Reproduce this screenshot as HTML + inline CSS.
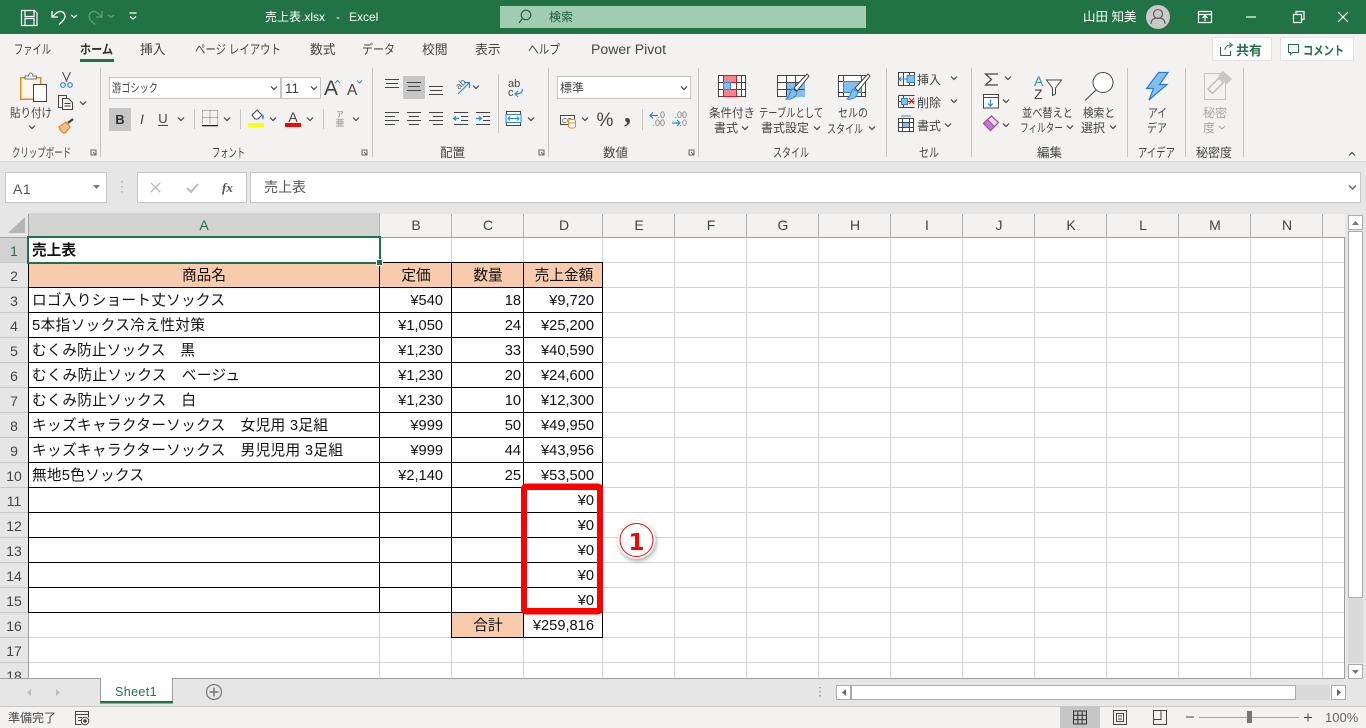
<!DOCTYPE html>
<html lang="ja"><head><meta charset="utf-8"><title>売上表.xlsx - Excel</title>
<style>
html,body{margin:0;padding:0;width:1366px;height:728px;overflow:hidden;background:#f3f2f1}
svg{display:block;font-family:"Liberation Sans","Noto Sans CJK JP",sans-serif}
.u{font-size:12px;fill:#444}
.m{text-anchor:middle}
.e{text-anchor:end}
.cell{font-size:14.67px;fill:#111}
.hd{font-size:14px;fill:#444;text-anchor:middle}
.l{fill:none;stroke:#444;stroke-width:1}
.crisp line,.crisp rect{shape-rendering:crispEdges}
</style></head><body>
<svg width="1366" height="728" viewBox="0 0 1366 728" xmlns="http://www.w3.org/2000/svg">
<defs>
<path id="c" d="M-3-1.5L0 1.5L3-1.5" fill="none" stroke="#444" stroke-width="1.2"/>
<path id="d" d="M91 150h5v5h-5zM93 152l3 3M96 153v2h-2" fill="none" stroke="#666" stroke-width="1"/>
</defs>
<!-- title bar -->
<rect width="1366" height="34" fill="#217346"/>
<g fill="none" stroke="#fff" stroke-width="1.2">
<path d="M21.5 10.5h13l2.5 2.5v12.5h-15.500zM25 10.500v6h9v-6M25 25.500v-7h9v7"/>
<path d="M52 11v6h6M52 17l5-4.500c3-2 6-1 7.500 1.500c1.500 3 0 6-5.500 10.500" stroke-width="1.300"/>
<path d="M102 11v6h-6M102 17l-5-4.500c-3-2-6-1-7.500 1.500c-1.500 3 0 6 5.500 10.500" stroke="#5f9d7b" stroke-width="1.300"/>
<path d="M71 15l3 2.500l3-2.500"/><path d="M108 15l3 2.500l3-2.500" stroke="#5f9d7b"/>
<path d="M129.500 13h7M130 16.500l3 2.500l3-2.500"/>
<path d="M1198.500 11.500h13v11h-13zM1198.500 14.500h13M1205 21v-5M1202.500 18l2.500-2.500l2.500 2.500"/>
<path d="M1246 17h10"/>
<path d="M1293.500 14.500h8v8h-8zM1296 14v-2.500h8v8h-2.500"/>
<path d="M1338 12l10 10M1348 12l-10 10"/>
</g>
<text x="265" y="21" font-size="12" fill="#fff">売上表.xlsx</text><text x="336" y="21" font-size="12" fill="#fff">-</text><text x="349" y="21" font-size="12" fill="#fff">Excel</text>
<rect x="500" y="6" width="366" height="22" fill="#a0cdb2"/>
<circle cx="526" cy="15" r="4.800" fill="none" stroke="#1e5c3a" stroke-width="1.100"/><path d="M522.500 18.500l-3.500 4.500" stroke="#1e5c3a" stroke-width="1.200"/>
<text x="549" y="21" font-size="12" fill="#1e5c3a">検索</text>
<text x="1083" y="21" font-size="12.500" fill="#fff">山田 知美</text>
<circle cx="1158" cy="17" r="12" fill="#c9c9c9"/><circle cx="1158" cy="14" r="4.500" fill="none" stroke="#555" stroke-width="1.100"/><path d="M1151 24c0-4.500 3-6 7-6s7 1.500 7 6" fill="none" stroke="#555" stroke-width="1.100"/>
<!-- tabs -->
<g class="u" style="font-size:12.800px">
<text x="14" y="54" textLength="37" lengthAdjust="spacingAndGlyphs">ファイル</text>
<text x="80" y="54" textLength="33" lengthAdjust="spacingAndGlyphs" font-weight="700" style="fill:#333">ホーム</text>
<text x="140" y="54">挿入</text>
<text x="195" y="54" textLength="86" lengthAdjust="spacingAndGlyphs">ページ レイアウト</text>
<text x="310" y="54">数式</text>
<text x="362" y="54" textLength="33" lengthAdjust="spacingAndGlyphs">データ</text>
<text x="422" y="54">校閲</text>
<text x="475" y="54">表示</text>
<text x="528" y="54" textLength="32" lengthAdjust="spacingAndGlyphs">ヘルプ</text>
<text x="591" y="54" textLength="75" lengthAdjust="spacingAndGlyphs" style="font-size:13.400px">Power Pivot</text>
</g>
<rect x="80" y="59" width="34" height="3" fill="#217346"/>
<rect x="1212.500" y="37.500" width="59" height="23" rx="1" fill="#fff" stroke="#e4e2e0"/>
<rect x="1280.500" y="37.500" width="73" height="23" rx="1" fill="#fff" stroke="#e4e2e0"/>
<path d="M1220.500 47v8.500h10V51M1225 50c0-3 2-5 6-5M1229 42.500l3.500 2.500l-3.500 2.500" fill="none" stroke="#217346"/>
<path d="M1288.500 44.500h10v8h-6l-2 2v-2h-2z" fill="none" stroke="#217346"/>
<text x="1236" y="55" font-size="13" font-weight="700" fill="#217346">共有</text>
<text x="1303" y="55" font-size="12.500" font-weight="700" fill="#217346" textLength="41" lengthAdjust="spacingAndGlyphs">コメント</text>
<!-- ribbon bottom -->
<rect y="161" width="1366" height="6" fill="#d9d9d9"/><rect y="162" width="1366" height="52" fill="#e6e6e6"/>
<!-- separators -->
<g stroke="#c8c6c4" class="crisp">
<line x1="100.500" x2="100.500" y1="68" y2="157"/><line x1="372.500" x2="372.500" y1="68" y2="157"/><line x1="548.500" x2="548.500" y1="68" y2="157"/><line x1="698.500" x2="698.500" y1="68" y2="157"/><line x1="886.500" x2="886.500" y1="68" y2="157"/><line x1="971.500" x2="971.500" y1="68" y2="157"/><line x1="1127.500" x2="1127.500" y1="68" y2="157"/><line x1="1185.500" x2="1185.500" y1="68" y2="157"/><line x1="1243.500" x2="1243.500" y1="68" y2="157"/>
<line x1="498.500" x2="498.500" y1="74" y2="133"/><line x1="194.500" x2="194.500" y1="109" y2="129"/><line x1="240.500" x2="240.500" y1="109" y2="129"/><line x1="323.500" x2="323.500" y1="109" y2="129"/><line x1="642.500" x2="642.500" y1="109" y2="130"/>
</g>
<!-- group labels -->
<g class="u" style="font-size:12.500px">
<text x="12" y="157" textLength="59" lengthAdjust="spacingAndGlyphs">クリップボード</text>
<text x="212" y="157" textLength="33" lengthAdjust="spacingAndGlyphs">フォント</text>
<text x="440" y="157">配置</text><text x="603" y="157">数値</text>
<text x="773" y="157" textLength="36" lengthAdjust="spacingAndGlyphs">スタイル</text>
<text x="919" y="157" textLength="20" lengthAdjust="spacingAndGlyphs">セル</text>
<text x="1037" y="157">編集</text>
<text x="1138" y="157" textLength="37" lengthAdjust="spacingAndGlyphs">アイデア</text>
<text x="1196" y="157" textLength="36" lengthAdjust="spacingAndGlyphs">秘密度</text>
</g>
<use href="#d"/><use href="#d" x="271"/><use href="#d" x="448"/><use href="#d" x="598"/>
<use href="#c" x="1352" y="154" transform="rotate(180 1352 154)"/>
<!-- clipboard -->
<rect x="20.750" y="77.750" width="20" height="21.500" fill="#fdf6ec" stroke="#e8891c" stroke-width="1.500"/>
<path d="M25 79v-3h3.500c.5-4 4-4 4.500 0h3.500v3z" fill="#f3f2f1" stroke="#777"/>
<rect x="33.500" y="84.500" width="13" height="17" fill="#fff" stroke="#444"/>
<text x="10" y="117" class="u" textLength="42" lengthAdjust="spacingAndGlyphs">貼り付け</text>
<use href="#c" x="32" y="127"/>
<path d="M62.500 72l4.500 9.500M70.500 72l-4.500 9.500" stroke="#444" fill="none"/><circle cx="63" cy="85" r="2.300" fill="none" stroke="#2b88d8" stroke-width="1.200"/><circle cx="70" cy="85" r="2.300" fill="none" stroke="#2b88d8" stroke-width="1.200"/>
<path d="M62 107.500h-3.500v-12h8v3M62.500 98.500h6l4 4v7h-10zM64.500 103.500h6M64.500 106h6" fill="none" stroke="#444"/>
<use href="#c" x="83" y="103"/>
<path d="M59 127l7-5l4 5l-5 6c-3 0-5-3-6-6z" fill="#f7c38a" stroke="#e8891c" stroke-width="1.200"/><path d="M68 123l5-4" stroke="#444" stroke-width="2.400"/>
<!-- font -->
<rect x="109.500" y="77.500" width="171" height="21" fill="#fff" stroke="#c6c6c6"/><rect x="281.500" y="77.500" width="39" height="21" fill="#fff" stroke="#c6c6c6"/>
<text x="112" y="92" class="u" textLength="46" lengthAdjust="spacingAndGlyphs">游ゴシック</text><text x="285" y="93" class="u" style="font-size:13.500px">11</text>
<use href="#c" x="274" y="88"/><use href="#c" x="314" y="88"/>
<text x="324" y="95" font-size="21" fill="#444">A</text><text x="347" y="95" font-size="15.500" fill="#444">A</text>
<path d="M335 83l2.500-2.500l2.500 2.500" fill="none" stroke="#2b88d8" stroke-width="1"/><path d="M357 80.500l2.500 2.500l2.500-2.500" fill="none" stroke="#2b88d8" stroke-width="1"/>
<rect x="109" y="108" width="22" height="23" fill="#c6c6c6"/>
<text x="120" y="124" class="m" font-size="13" font-weight="700" fill="#333">B</text>
<text x="142" y="124" class="m" font-size="14" font-style="italic" fill="#444">I</text>
<text x="163" y="123" class="m" font-size="13" fill="#444">U</text><path d="M158 125.500h10" stroke="#444"/>
<use href="#c" x="181" y="119"/>
<path d="M202.500 110.500h15v14M202.500 110.500v14M210 110.500v14M202.500 117.500h15" fill="none" stroke="#777" stroke-dasharray="1 1" shape-rendering="crispEdges"/><rect x="202" y="125" width="16" height="1.300" fill="#222"/>
<use href="#c" x="227" y="119"/>
<path d="M252 115l5-5l5 5l-4 4h-3z" fill="#fff" stroke="#444"/><path d="M262 115c2 1 1 3 .5 4" fill="none" stroke="#2b88d8" stroke-width="1.500"/><rect x="248" y="123" width="16" height="4" fill="#ff0"/>
<use href="#c" x="273" y="119"/>
<text x="293" y="122" class="m" font-size="14" fill="#444">A</text><rect x="285" y="123" width="16" height="4" fill="#f00"/>
<use href="#c" x="310" y="119"/>
<text x="340" y="117" class="m" font-size="7.500" fill="#777">ア</text><text x="340" y="126" class="m" font-size="9" fill="#888">亜</text>
<use href="#c" x="356" y="119"/>
<!-- alignment -->
<rect x="403" y="76" width="22" height="23" fill="#c6c6c6"/>
<g stroke="#444" class="crisp">
<line x1="385" x2="399" y1="79.500" y2="79.500"/><line x1="386" x2="398" y1="83.500" y2="83.500"/><line x1="385" x2="399" y1="87.500" y2="87.500"/>
<line x1="407" x2="421" y1="82.500" y2="82.500"/><line x1="408" x2="420" y1="86.500" y2="86.500"/><line x1="407" x2="421" y1="90.500" y2="90.500"/>
<line x1="429" x2="443" y1="86.500" y2="86.500"/><line x1="430" x2="442" y1="90.500" y2="90.500"/><line x1="429" x2="443" y1="94.500" y2="94.500"/>
<line x1="385" x2="399" y1="112.500" y2="112.500"/><line x1="385" x2="395" y1="116.500" y2="116.500"/><line x1="385" x2="399" y1="120.500" y2="120.500"/><line x1="385" x2="395" y1="124.500" y2="124.500"/>
<line x1="407" x2="421" y1="112.500" y2="112.500"/><line x1="409" x2="419" y1="116.500" y2="116.500"/><line x1="407" x2="421" y1="120.500" y2="120.500"/><line x1="409" x2="419" y1="124.500" y2="124.500"/>
<line x1="429" x2="443" y1="112.500" y2="112.500"/><line x1="433" x2="443" y1="116.500" y2="116.500"/><line x1="429" x2="443" y1="120.500" y2="120.500"/><line x1="433" x2="443" y1="124.500" y2="124.500"/>
<line x1="454" x2="468" y1="112.500" y2="112.500"/><line x1="461" x2="468" y1="116.500" y2="116.500"/><line x1="461" x2="468" y1="120.500" y2="120.500"/><line x1="454" x2="468" y1="124.500" y2="124.500"/>
<line x1="476" x2="490" y1="112.500" y2="112.500"/><line x1="483" x2="490" y1="116.500" y2="116.500"/><line x1="483" x2="490" y1="120.500" y2="120.500"/><line x1="476" x2="490" y1="124.500" y2="124.500"/>
</g>
<path d="M459 118.500h-5M456 116.500l-2.500 2l2.500 2M476 118.500h5M479 116.500l2.500 2l-2.500 2" fill="none" stroke="#2b88d8" stroke-width="1.200"/>
<text x="459" y="90" font-size="9.500" fill="#666" transform="rotate(-45 459 90)">ab</text><path d="M458 94l11-11M464 82.500h5.500v5.500" fill="none" stroke="#2b88d8" stroke-width="1.200"/>
<use href="#c" x="476" y="87"/>
<text x="508" y="87" font-size="11" fill="#444">ab</text><text x="508" y="96" font-size="11" fill="#444">c</text>
<path d="M522 89c1 3-1 5-7 5M518 91l-3 3l3 3" fill="none" stroke="#2b88d8" stroke-width="1.200"/>
<rect x="506.500" y="111.500" width="14" height="14" fill="#fff" stroke="#444"/><rect x="506" y="114.500" width="15" height="8" fill="#fff" stroke="#2b88d8"/><path d="M508 118.500h11M510 116.500l-2 2l2 2M517 116.500l2 2l-2 2" fill="none" stroke="#2b88d8"/>
<use href="#c" x="531" y="119"/>
<!-- number -->
<rect x="557.500" y="76.500" width="133" height="22" fill="#fff" stroke="#c6c6c6"/>
<text x="560" y="92" class="u">標準</text><use href="#c" x="684" y="88"/>
<rect x="560.500" y="115.500" width="14" height="9" fill="#fff" stroke="#444"/><text x="562" y="123" font-size="7" fill="#444">CC</text>
<rect x="568.500" y="119.500" width="7" height="8.500" rx="2" fill="#fff" stroke="#e8891c"/><path d="M568.500 123h7" stroke="#e8891c"/>
<use href="#c" x="585" y="119"/>
<text x="605" y="126" class="m" font-size="19" fill="#444">%</text>
<text x="627.500" y="122" class="m" font-size="28" font-weight="700" fill="#444" font-family="Liberation Serif">,</text>
<text x="665" y="118" class="e" font-size="9" fill="#777">.0</text><text x="665" y="126" class="e" font-size="9" fill="#777">.00</text>
<text x="687" y="118" class="e" font-size="9" fill="#777">.00</text><text x="687" y="126" class="e" font-size="9" fill="#777">.0</text>
<path d="M650 115.500h8M653 112.500l-3 3l3 3M672 123h8M677 120l3 3l-3 3" fill="none" stroke="#2b88d8" stroke-width="1.200"/>
<!-- styles -->
<g fill="none" stroke="#444">
<rect x="718.500" y="75.500" width="27" height="21" fill="#fff"/><path d="M723.500 75.500v21M736.500 75.500v21M741.500 75.500v21M718.500 82.500h27M718.500 89.500h27"/>
<rect x="723.500" y="75.500" width="13" height="7" fill="#f4858e" stroke="#e81123"/><rect x="723.500" y="89.500" width="13" height="7" fill="#f4858e" stroke="#e81123"/><rect x="723.500" y="82.500" width="7" height="7" fill="#83beec" stroke="#2b88d8"/>
<rect x="777.500" y="75.500" width="27" height="21" fill="#fff"/><rect x="787" y="82" width="18" height="15" fill="#83beec" stroke="none"/><path d="M786.500 75.500v21M795.500 75.500v21M777.500 82.500h27M777.500 89.500h27"/>
<rect x="838.500" y="75.500" width="27" height="21" fill="#fff"/><path d="M843.500 75.500v21M861.500 75.500v21M838.500 81.500h27M838.500 92.500h27"/><rect x="843.500" y="81.500" width="18" height="11" fill="#83beec" stroke="#2b88d8"/>
</g>
<path d="M807 74l-13 14l3 3l12-15z" fill="#fff" stroke="#444"/><path d="M792 89c-2 1-1 6-6 10c5 1 10-1 11-7z" fill="#83beec" stroke="#2b88d8"/>
<path d="M868 74l-13 14l3 3l12-15z" fill="#fff" stroke="#444"/><path d="M853 89c-2 1-1 6-6 10c5 1 10-1 11-7z" fill="#83beec" stroke="#2b88d8"/>
<g class="u">
<text x="709" y="117" textLength="46" lengthAdjust="spacingAndGlyphs">条件付き</text><text x="714" y="132">書式</text><use href="#c" x="745" y="128"/>
<text x="759" y="117" textLength="64" lengthAdjust="spacingAndGlyphs">テーブルとして</text><text x="761" y="132" textLength="48" lengthAdjust="spacingAndGlyphs">書式設定</text><use href="#c" x="817" y="128"/>
<text x="838" y="117" textLength="30" lengthAdjust="spacingAndGlyphs">セルの</text><text x="827" y="133" textLength="36" lengthAdjust="spacingAndGlyphs">スタイル</text><use href="#c" x="872" y="128"/>
</g>
<!-- cells -->
<g fill="none" stroke="#444">
<rect x="898.500" y="72.500" width="16" height="13" fill="#fff"/><path d="M903.500 72.500v13M909.500 72.500v13M898.500 79h16"/><rect x="907" y="75.500" width="7.500" height="7" fill="#83beec" stroke="#2b88d8"/><path d="M906 79h-7M901.500 76.500l-2.500 2.500l2.500 2.500" stroke="#2b88d8"/>
<path d="M898.500 95.500h16M898.500 107.500h16M898.500 95.500v12M903.500 95.500v12M898.500 101.500h16"/><rect x="901.500" y="98.500" width="6" height="6" fill="#83beec" stroke="#2b88d8"/><path d="M909 98l5 6M914 98l-5 6" stroke="#e81123"/>
<rect x="898.500" y="118.500" width="15" height="13" fill="#fff"/><rect x="902.500" y="122.500" width="7" height="5" fill="#83beec" stroke="#2b88d8"/><path d="M902.500 118.500v13M909.500 118.500v13M898.500 122.500h15M898.500 127.500h15"/><path d="M901 116h10" stroke="#2b88d8"/>
</g>
<g class="u"><text x="917" y="84">挿入</text><text x="917" y="107">削除</text><text x="917" y="130">書式</text></g>
<use href="#c" x="954" y="78"/><use href="#c" x="954" y="101"/><use href="#c" x="948" y="125"/>
<!-- edit -->
<path d="M998 74h-12.500l6 5.500l-6 5.500h12.500" fill="none" stroke="#444" stroke-width="1.200"/>
<use href="#c" x="1008" y="78"/>
<rect x="983.500" y="94.500" width="15" height="13.500" fill="#fff" stroke="#444"/><path d="M983.500 97.500h15" stroke="#444"/><path d="M990.500 99.500v6M988 103.500l2.500 2.500l2.500-2.500" fill="none" stroke="#2b88d8" stroke-width="1.200"/>
<use href="#c" x="1006" y="101"/>
<path d="M983.500 123.500l8-7.500l7 6.500l-8 8z" fill="#f0e2f3" stroke="#a349a4" stroke-width="1.200"/><path d="M983.500 123.500l4-3.800l7 6.800l-3.900 4z" fill="#c07ccb" stroke="#a349a4"/>
<use href="#c" x="1006" y="125"/>
<text x="1034" y="86" font-size="14" fill="#2b88d8">A</text><text x="1034" y="99" font-size="14" fill="#444">Z</text>
<path d="M1046.500 80h15l-6 8v6l-3 1.500v-7.500z" fill="#fff" stroke="#444"/>
<g class="u"><text x="1022" y="117" textLength="51" lengthAdjust="spacingAndGlyphs">並べ替えと</text><text x="1020" y="132" textLength="43" lengthAdjust="spacingAndGlyphs">フィルター</text>
<text x="1083" y="117" textLength="32" lengthAdjust="spacingAndGlyphs">検索と</text><text x="1081" y="132">選択</text></g>
<use href="#c" x="1070" y="127"/><use href="#c" x="1113" y="127"/>
<circle cx="1103" cy="82.500" r="10" fill="#fff" stroke="#444"/><path d="M1096 90l-11 10.500" stroke="#444" fill="none"/>
<!-- ideas -->
<path d="M1158.500 72.500l-12 16h7l-4.500 11.500l18-15.500h-7.500l8.500-12z" fill="#83beec" stroke="#2b7cd3" stroke-width="1.200"/>
<g class="u"><text x="1148" y="117" textLength="19" lengthAdjust="spacingAndGlyphs">アイ</text><text x="1147" y="132" textLength="20" lengthAdjust="spacingAndGlyphs">デア</text></g>
<!-- sensitivity -->
<rect x="1204.500" y="73.500" width="21" height="26" fill="none" stroke="#c4c4c4"/><path d="M1208 89l11-11l4.500 4.500l-11 11z" fill="#f3f2f1" stroke="#bdbdbd" stroke-width="1.500"/><path d="M1218 76l5-5l9 8l-5 5z" fill="#c8c8c8"/>
<g font-size="12" fill="#a6a6a6"><text x="1203" y="117">秘密</text><text x="1203" y="132">度</text></g>
<path d="M1219 126l3 3l3-3" fill="none" stroke="#a6a6a6"/>
<!-- formula bar -->
<rect x="5.500" y="172.500" width="101" height="30" fill="#fff" stroke="#c6c6c6"/>
<text x="13" y="194" font-size="14" fill="#555" letter-spacing=".5">A1</text>
<path d="M93 185h7l-3.500 4z" fill="#777"/>
<path d="M122 181v1.500M122 186v1.500M122 191v1.500" stroke="#aaa" stroke-width="1.500"/>
<rect x="137.500" y="172.500" width="109" height="30" fill="#fff" stroke="#c6c6c6"/>
<path d="M151 183l9 9M160 183l-9 9" stroke="#bdbdbd" stroke-width="1.500" fill="none"/>
<path d="M187 188l4 4l7-8" stroke="#bdbdbd" stroke-width="2" fill="none"/>
<text x="222" y="192" font-family="Liberation Serif" font-size="13" font-style="italic" font-weight="700" fill="#555">fx</text>
<rect x="250.500" y="172.500" width="1110" height="30" fill="#fff" stroke="#c6c6c6"/>
<text x="264" y="192" font-size="14" fill="#555">売上表</text>
<path d="M1349 185.500l3.500 3.500l3.500-3.500" fill="none" stroke="#666" stroke-width="1.500"/>
<!-- sheet -->
<rect x="29" y="238" width="1315" height="441" fill="#fff"/>
<rect x="0" y="214" width="28" height="465" fill="#e6e6e6"/>
<rect x="29" y="213" width="351" height="24" fill="#d2d2d2"/><rect x="0" y="238" width="28" height="25" fill="#d2d2d2"/>
<path d="M8 233l17-16v16z" fill="#b5b5b5"/>
<g class="crisp" stroke="#d4d4d4">
<line x1="29" x2="1344" y1="287.500" y2="287.500"/><line x1="29" x2="1344" y1="312.500" y2="312.500"/><line x1="29" x2="1344" y1="337.500" y2="337.500"/><line x1="29" x2="1344" y1="362.500" y2="362.500"/><line x1="29" x2="1344" y1="387.500" y2="387.500"/><line x1="29" x2="1344" y1="412.500" y2="412.500"/><line x1="29" x2="1344" y1="437.500" y2="437.500"/><line x1="29" x2="1344" y1="462.500" y2="462.500"/><line x1="29" x2="1344" y1="487.500" y2="487.500"/><line x1="29" x2="1344" y1="512.500" y2="512.500"/><line x1="29" x2="1344" y1="537.500" y2="537.500"/><line x1="29" x2="1344" y1="562.500" y2="562.500"/><line x1="29" x2="1344" y1="587.500" y2="587.500"/><line x1="29" x2="1344" y1="612.500" y2="612.500"/><line x1="29" x2="1344" y1="637.500" y2="637.500"/><line x1="29" x2="1344" y1="662.500" y2="662.500"/><line x1="29" x2="1344" y1="262.500" y2="262.500"/>
<line x1="379.500" x2="379.500" y1="237" y2="678"/><line x1="451.500" x2="451.500" y1="237" y2="678"/><line x1="523.500" x2="523.500" y1="237" y2="678"/><line x1="602.500" x2="602.500" y1="237" y2="678"/><line x1="674.500" x2="674.500" y1="237" y2="678"/><line x1="746.500" x2="746.500" y1="237" y2="678"/><line x1="818.500" x2="818.500" y1="237" y2="678"/><line x1="890.500" x2="890.500" y1="237" y2="678"/><line x1="962.500" x2="962.500" y1="237" y2="678"/><line x1="1034.500" x2="1034.500" y1="237" y2="678"/><line x1="1106.500" x2="1106.500" y1="237" y2="678"/><line x1="1178.500" x2="1178.500" y1="237" y2="678"/><line x1="1250.500" x2="1250.500" y1="237" y2="678"/><line x1="1322.500" x2="1322.500" y1="237" y2="678"/>
</g>
<!-- header row dividers -->
<g class="crisp" stroke="#b4b4b4">
<line x1="379.500" x2="379.500" y1="214" y2="237"/><line x1="451.500" x2="451.500" y1="214" y2="237"/><line x1="523.500" x2="523.500" y1="214" y2="237"/><line x1="602.500" x2="602.500" y1="214" y2="237"/><line x1="674.500" x2="674.500" y1="214" y2="237"/><line x1="746.500" x2="746.500" y1="214" y2="237"/><line x1="818.500" x2="818.500" y1="214" y2="237"/><line x1="890.500" x2="890.500" y1="214" y2="237"/><line x1="962.500" x2="962.500" y1="214" y2="237"/><line x1="1034.500" x2="1034.500" y1="214" y2="237"/><line x1="1106.500" x2="1106.500" y1="214" y2="237"/><line x1="1178.500" x2="1178.500" y1="214" y2="237"/><line x1="1250.500" x2="1250.500" y1="214" y2="237"/><line x1="1322.500" x2="1322.500" y1="214" y2="237"/>
</g>
<g class="crisp" stroke="#c8c8c8">
<line x1="0" x2="28" y1="262.500" y2="262.500"/><line x1="0" x2="28" y1="287.500" y2="287.500"/><line x1="0" x2="28" y1="312.500" y2="312.500"/><line x1="0" x2="28" y1="337.500" y2="337.500"/><line x1="0" x2="28" y1="362.500" y2="362.500"/><line x1="0" x2="28" y1="387.500" y2="387.500"/><line x1="0" x2="28" y1="412.500" y2="412.500"/><line x1="0" x2="28" y1="437.500" y2="437.500"/><line x1="0" x2="28" y1="462.500" y2="462.500"/><line x1="0" x2="28" y1="487.500" y2="487.500"/><line x1="0" x2="28" y1="512.500" y2="512.500"/><line x1="0" x2="28" y1="537.500" y2="537.500"/><line x1="0" x2="28" y1="562.500" y2="562.500"/><line x1="0" x2="28" y1="587.500" y2="587.500"/><line x1="0" x2="28" y1="612.500" y2="612.500"/><line x1="0" x2="28" y1="637.500" y2="637.500"/><line x1="0" x2="28" y1="662.500" y2="662.500"/>
</g>
<g class="crisp" stroke="#9e9e9e">
<line x1="0" x2="1345" y1="237.500" y2="237.500"/><line x1="28.500" x2="28.500" y1="214" y2="679"/><line x1="1344.500" x2="1344.500" y1="237" y2="679"/>
</g>
<!-- fills -->
<g fill="#f8cbad">
<rect x="29" y="263" width="350" height="24"/><rect x="380" y="263" width="71" height="24"/><rect x="452" y="263" width="71" height="24"/><rect x="524" y="263" width="78" height="24"/><rect x="452" y="613" width="71" height="24"/>
</g>
<!-- black table borders -->
<g class="crisp" stroke="#000">
<line x1="28" x2="603" y1="262.500" y2="262.500"/><line x1="28" x2="603" y1="287.500" y2="287.500"/><line x1="28" x2="603" y1="312.500" y2="312.500"/><line x1="28" x2="603" y1="337.500" y2="337.500"/><line x1="28" x2="603" y1="362.500" y2="362.500"/><line x1="28" x2="603" y1="387.500" y2="387.500"/><line x1="28" x2="603" y1="412.500" y2="412.500"/><line x1="28" x2="603" y1="437.500" y2="437.500"/><line x1="28" x2="603" y1="462.500" y2="462.500"/><line x1="28" x2="603" y1="487.500" y2="487.500"/><line x1="28" x2="603" y1="512.500" y2="512.500"/><line x1="28" x2="603" y1="537.500" y2="537.500"/><line x1="28" x2="603" y1="562.500" y2="562.500"/><line x1="28" x2="603" y1="587.500" y2="587.500"/><line x1="28" x2="603" y1="612.500" y2="612.500"/><line x1="451" x2="603" y1="637.500" y2="637.500"/>
<line x1="28.500" x2="28.500" y1="262" y2="613"/><line x1="379.500" x2="379.500" y1="262" y2="613"/><line x1="451.500" x2="451.500" y1="262" y2="638"/><line x1="523.500" x2="523.500" y1="262" y2="638"/><line x1="602.500" x2="602.500" y1="262" y2="638"/>
</g>
<!-- column headers -->
<g class="hd">
<text x="204" y="230" style="fill:#217346">A</text><text x="416" y="230">B</text><text x="488" y="230">C</text><text x="564" y="230">D</text><text x="639" y="230">E</text><text x="711" y="230">F</text><text x="783" y="230">G</text><text x="855" y="230">H</text><text x="927" y="230">I</text><text x="999" y="230">J</text><text x="1071" y="230">K</text><text x="1143" y="230">L</text><text x="1215" y="230">M</text><text x="1287" y="230">N</text>
</g>
<g class="hd">
<text x="14" y="256" style="fill:#217346">1</text><text x="14" y="281">2</text><text x="14" y="306">3</text><text x="14" y="331">4</text><text x="14" y="356">5</text><text x="14" y="381">6</text><text x="14" y="406">7</text><text x="14" y="431">8</text><text x="14" y="456">9</text><text x="14" y="481">10</text><text x="14" y="506">11</text><text x="14" y="531">12</text><text x="14" y="556">13</text><text x="14" y="581">14</text><text x="14" y="606">15</text><text x="14" y="631">16</text><text x="14" y="656">17</text><text x="14" y="681">18</text>
</g>
<!-- cells -->
<g class="cell">
<text x="32" y="255" font-weight="700">売上表</text>
<text x="204" y="280" class="m">商品名</text><text x="416" y="280" class="m">定価</text><text x="488" y="280" class="m">数量</text><text x="564" y="280" class="m">売上金額</text>
<text x="32" y="305" textLength="193">ロゴ入りショート丈ソックス</text>
<text x="32" y="330" textLength="173">5本指ソックス冷え性対策</text>
<text x="32" y="355" textLength="163">むくみ防止ソックス　黒</text>
<text x="32" y="380" textLength="208">むくみ防止ソックス　ベージュ</text>
<text x="32" y="405" textLength="164">むくみ防止ソックス　白</text>
<text x="32" y="430" textLength="296">キッズキャラクターソックス　女児用 3足組</text>
<text x="32" y="455" textLength="311">キッズキャラクターソックス　男児児用 3足組</text>
<text x="32" y="480" textLength="112">無地5色ソックス</text>
</g>
<g class="cell e">
<text x="443" y="305">¥540</text><text x="443" y="330">¥1,050</text><text x="443" y="355">¥1,230</text><text x="443" y="380">¥1,230</text><text x="443" y="405">¥1,230</text><text x="443" y="430">¥999</text><text x="443" y="455">¥999</text><text x="443" y="480">¥2,140</text>
<text x="521" y="305">18</text><text x="521" y="330">24</text><text x="521" y="355">33</text><text x="521" y="380">20</text><text x="521" y="405">10</text><text x="521" y="430">50</text><text x="521" y="455">44</text><text x="521" y="480">25</text>
<text x="594" y="305">¥9,720</text><text x="594" y="330">¥25,200</text><text x="594" y="355">¥40,590</text><text x="594" y="380">¥24,600</text><text x="594" y="405">¥12,300</text><text x="594" y="430">¥49,950</text><text x="594" y="455">¥43,956</text><text x="594" y="480">¥53,500</text>
<text x="594" y="505">¥0</text><text x="594" y="530">¥0</text><text x="594" y="555">¥0</text><text x="594" y="580">¥0</text><text x="594" y="605">¥0</text>
<text x="594" y="630">¥259,816</text>
</g>
<text x="488" y="630" class="cell m">合計</text>
<!-- selection -->
<rect x="28" y="237" width="352" height="26" fill="none" stroke="#217346" stroke-width="2"/>
<rect x="376.500" y="259.500" width="6" height="6" fill="#217346" stroke="#fff"/>
<!-- annotation -->
<path fill="#f00" fill-rule="evenodd" d="M526 483.500h72a5 5 0 0 1 5 5v121a5 5 0 0 1-5 5h-72a5 5 0 0 1-5-5v-121a5 5 0 0 1 5-5zM527 490v118h70V490z"/>
<g style="filter:drop-shadow(1px 2px 2px rgba(0,0,0,.35))"><circle cx="636.500" cy="540" r="19" fill="#fff"/></g>
<circle cx="636.500" cy="540" r="16.500" fill="#fff" stroke="#f00" stroke-width="1"/>
<text x="636.500" y="550" class="m" font-family="DejaVu Sans" font-size="23" font-weight="700" fill="#f00">1</text>
<!-- vertical scrollbar -->
<rect x="1345" y="214" width="21" height="465" fill="#e6e6e6"/>
<rect x="1348" y="231" width="15" height="432" fill="#dadada"/>
<rect x="1348.500" y="231.500" width="14" height="366" fill="#fff" stroke="#ababab"/>
<rect x="1348.500" y="215.500" width="14" height="14" fill="#fff" stroke="#ababab"/><path d="M1352 225l3.500-4l3.500 4z" fill="#777"/>
<rect x="1348.500" y="664.500" width="14" height="14" fill="#fff" stroke="#ababab"/><path d="M1352 670h7l-3.500 4z" fill="#777"/>
<!-- tab bar -->
<rect x="0" y="679" width="1366" height="28" fill="#e6e6e6"/>
<rect x="0" y="678" width="1345" height="1" fill="#9e9e9e"/>
<rect x="100" y="678" width="73" height="23" fill="#fff"/>
<path d="M100.500 678v23M172.500 678v23" stroke="#9e9e9e"/>
<rect x="100" y="701" width="73" height="2.500" fill="#217346"/>
<text x="136" y="696" class="m" font-size="12.500" fill="#217346" letter-spacing=".4">Sheet1</text>
<path d="M31 689v7l-4-3.500zM56 689v7l4-3.500z" fill="#bdbdbd"/>
<circle cx="214" cy="692" r="7.500" fill="none" stroke="#777" stroke-width="1.200"/><path d="M209.500 692h9M214 687.500v9" stroke="#777" stroke-width="1.500"/>
<path d="M820 687v1.500M820 691v1.500M820 695v1.500" stroke="#999" stroke-width="1.500"/>
<rect x="836" y="685" width="494" height="15" fill="#dadada"/>
<rect x="851.500" y="685.500" width="444" height="14" fill="#fff" stroke="#ababab"/>
<rect x="836.500" y="685.500" width="14" height="14" fill="#fff" stroke="#ababab"/><path d="M846 689v7l-4-3.500z" fill="#666"/>
<rect x="1331.500" y="685.500" width="14" height="14" fill="#fff" stroke="#ababab"/><path d="M1337 689v7l4-3.500z" fill="#666"/>
<!-- status bar -->
<rect x="0" y="707" width="1366" height="21" fill="#f3f2f1"/><rect x="0" y="706" width="1366" height="1" fill="#c6c6c6"/>
<text x="8" y="722" class="u">準備完了</text>
<path d="M75.500 711.500h13v3h-13zM75.500 714.500v10h6M78 717.500h4M78 720.500h3M88.500 714.500v3" fill="none" stroke="#444"/><circle cx="85" cy="721" r="3.800" fill="none" stroke="#444"/><circle cx="85" cy="721" r="1.800" fill="#444"/>
<rect x="1060" y="707" width="40" height="21" fill="#c6c6c6"/>
<path d="M1073.500 711h13v13h-13zM1073.500 715.300h13M1073.500 719.600h13M1077.800 711v13M1082.200 711v13" fill="none" stroke="#333"/>
<path d="M1113.500 710.500h13v14h-13zM1116.500 713.500h7v8h-7zM1118 716h4M1118 719h4" fill="none" stroke="#444"/>
<path d="M1153.500 710.500h13v14h-13zM1153.500 719.500h7.500v-9" fill="none" stroke="#444"/>
<path d="M1186 717h8M1304 717.500h8M1308 713.500v8" stroke="#444" fill="none"/>
<rect x="1199" y="717" width="100" height="1" fill="#a6a6a6"/>
<rect x="1247" y="711" width="5" height="12" fill="#777"/>
<text x="1325" y="722" font-size="13" fill="#666">100%</text>
</svg>
</body></html>
